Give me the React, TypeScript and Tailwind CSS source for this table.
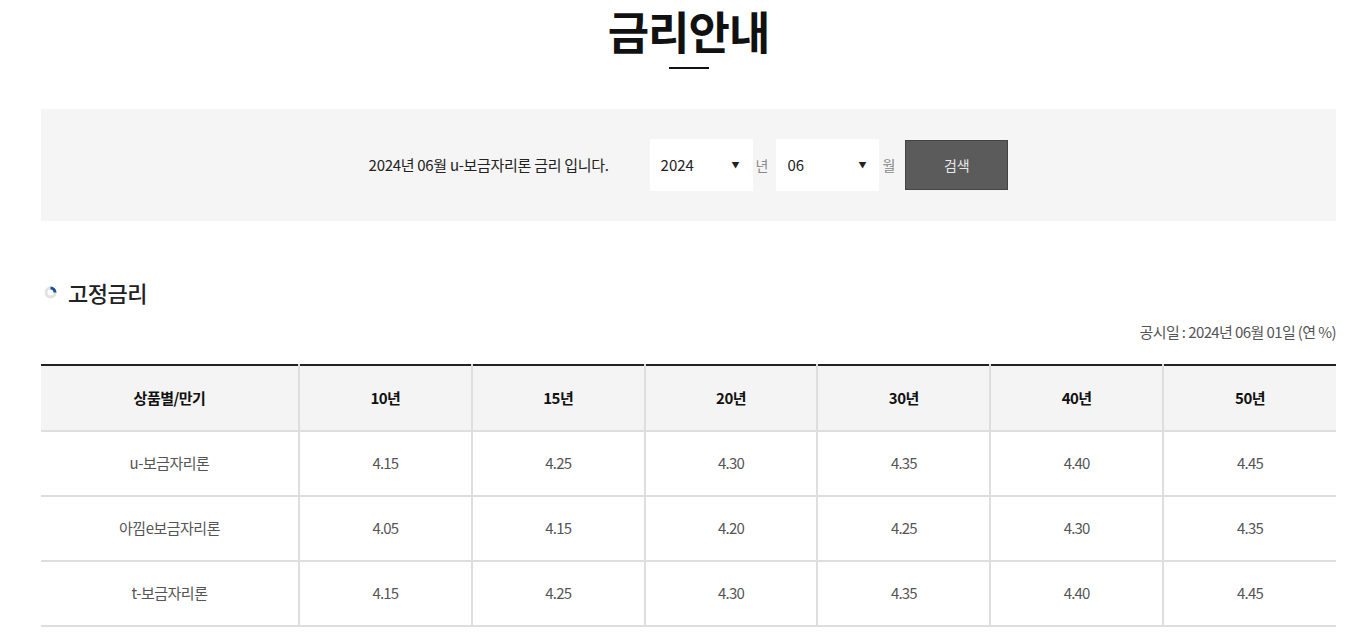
import React from "react";

const years = ["10년", "15년", "20년", "30년", "40년", "50년"];

const rows = [
  { name: "u-보금자리론", rates: ["4.15", "4.25", "4.30", "4.35", "4.40", "4.45"] },
  { name: "아낌e보금자리론", rates: ["4.05", "4.15", "4.20", "4.25", "4.30", "4.35"] },
  { name: "t-보금자리론", rates: ["4.15", "4.25", "4.30", "4.35", "4.40", "4.45"] },
];

function SelectBox({ value }: { value: string }) {
  return (
    <div className="flex h-[52px] w-[103px] items-center justify-between bg-white pl-[11px] pr-[13px] text-[15px] text-[#222]">
      <span>{value}</span>
      <span className="text-[8px] text-[#222]">▼</span>
    </div>
  );
}

function RingIcon() {
  return (
    <svg width="13" height="13" viewBox="0 0 13 13">
      <circle cx="6.5" cy="6.5" r="4.5" fill="none" stroke="#e3e3e3" strokeWidth="3" />
      <path d="M6.5 2 A4.5 4.5 0 0 1 11 6.5" fill="none" stroke="#1c4f9c" strokeWidth="3" />
    </svg>
  );
}

export default function App() {
  return (
    <div
      className="min-h-[640px] bg-white pl-[41px]"
      style={{ fontFamily: '"Noto Sans CJK KR", "Noto Sans", sans-serif' }}
    >
      <div className="w-[1295px]">
        {/* title */}
        <div className="flex flex-col items-center pt-[4px]">
          <h1 className="text-[45px] font-bold leading-[54px] tracking-[-1px] text-[#111]">
            금리안내
          </h1>
          <div className="mt-[9px] h-[2px] w-[40px] bg-[#111]" />
        </div>

        {/* search box */}
        <div className="mt-[40px] flex h-[112px] items-center justify-center bg-[#f5f5f5]">
          <p className="mr-[41px] text-[15px] tracking-[-0.3px] text-[#222]">
            2024년 06월 u-보금자리론 금리 입니다.
          </p>
          <SelectBox value="2024" />
          <span className="ml-[3px] mr-[8px] text-[14px] text-[#888]">년</span>
          <SelectBox value="06" />
          <span className="ml-[3px] mr-[10px] text-[14px] text-[#888]">월</span>
          <button className="h-[50px] w-[103px] border border-[#444] bg-[#5b5b5b] text-[14px] text-[#e8e8e8]">
            검색
          </button>
        </div>

        {/* section heading */}
        <div className="mt-[57px] flex items-center gap-[11px] pl-[3px]">
          <RingIcon />
          <h2 className="text-[22px] font-medium leading-[28px] tracking-[-0.5px] text-[#222]">
            고정금리
          </h2>
        </div>

        <p className="mt-[16px] text-right text-[15px] leading-[20px] tracking-[-0.6px] text-[#555]">
          공시일 : 2024년 06월 01일 (연 %)
        </p>

        {/* table */}
        <table className="mt-[22px] w-full table-fixed border-collapse border-t-2 border-t-[#222] text-[15px]">
          <colgroup>
            <col className="w-[258px]" />
            {years.map((y) => (
              <col key={y} className="w-[172.8px]" />
            ))}
          </colgroup>
          <thead>
            <tr className="h-[66px] bg-[#f4f4f4]">
              <th className="border-b-2 border-[#dedede] font-bold tracking-[-0.5px] text-[#111]">
                상품별/만기
              </th>
              {years.map((y) => (
                <th
                  key={y}
                  className="border-b-2 border-l-2 border-[#dedede] font-bold tracking-[-0.5px] text-[#111]"
                >
                  {y}
                </th>
              ))}
            </tr>
          </thead>
          <tbody>
            {rows.map((r) => (
              <tr key={r.name} className="h-[65px]">
                <td className="border-b-2 border-[#dedede] text-center tracking-[-0.5px] text-[#555]">
                  {r.name}
                </td>
                {r.rates.map((v, i) => (
                  <td
                    key={i}
                    className="border-b-2 border-l-2 border-[#dedede] text-center tracking-[-0.8px] text-[#555]"
                  >
                    {v}
                  </td>
                ))}
              </tr>
            ))}
          </tbody>
        </table>
      </div>
    </div>
  );
}
